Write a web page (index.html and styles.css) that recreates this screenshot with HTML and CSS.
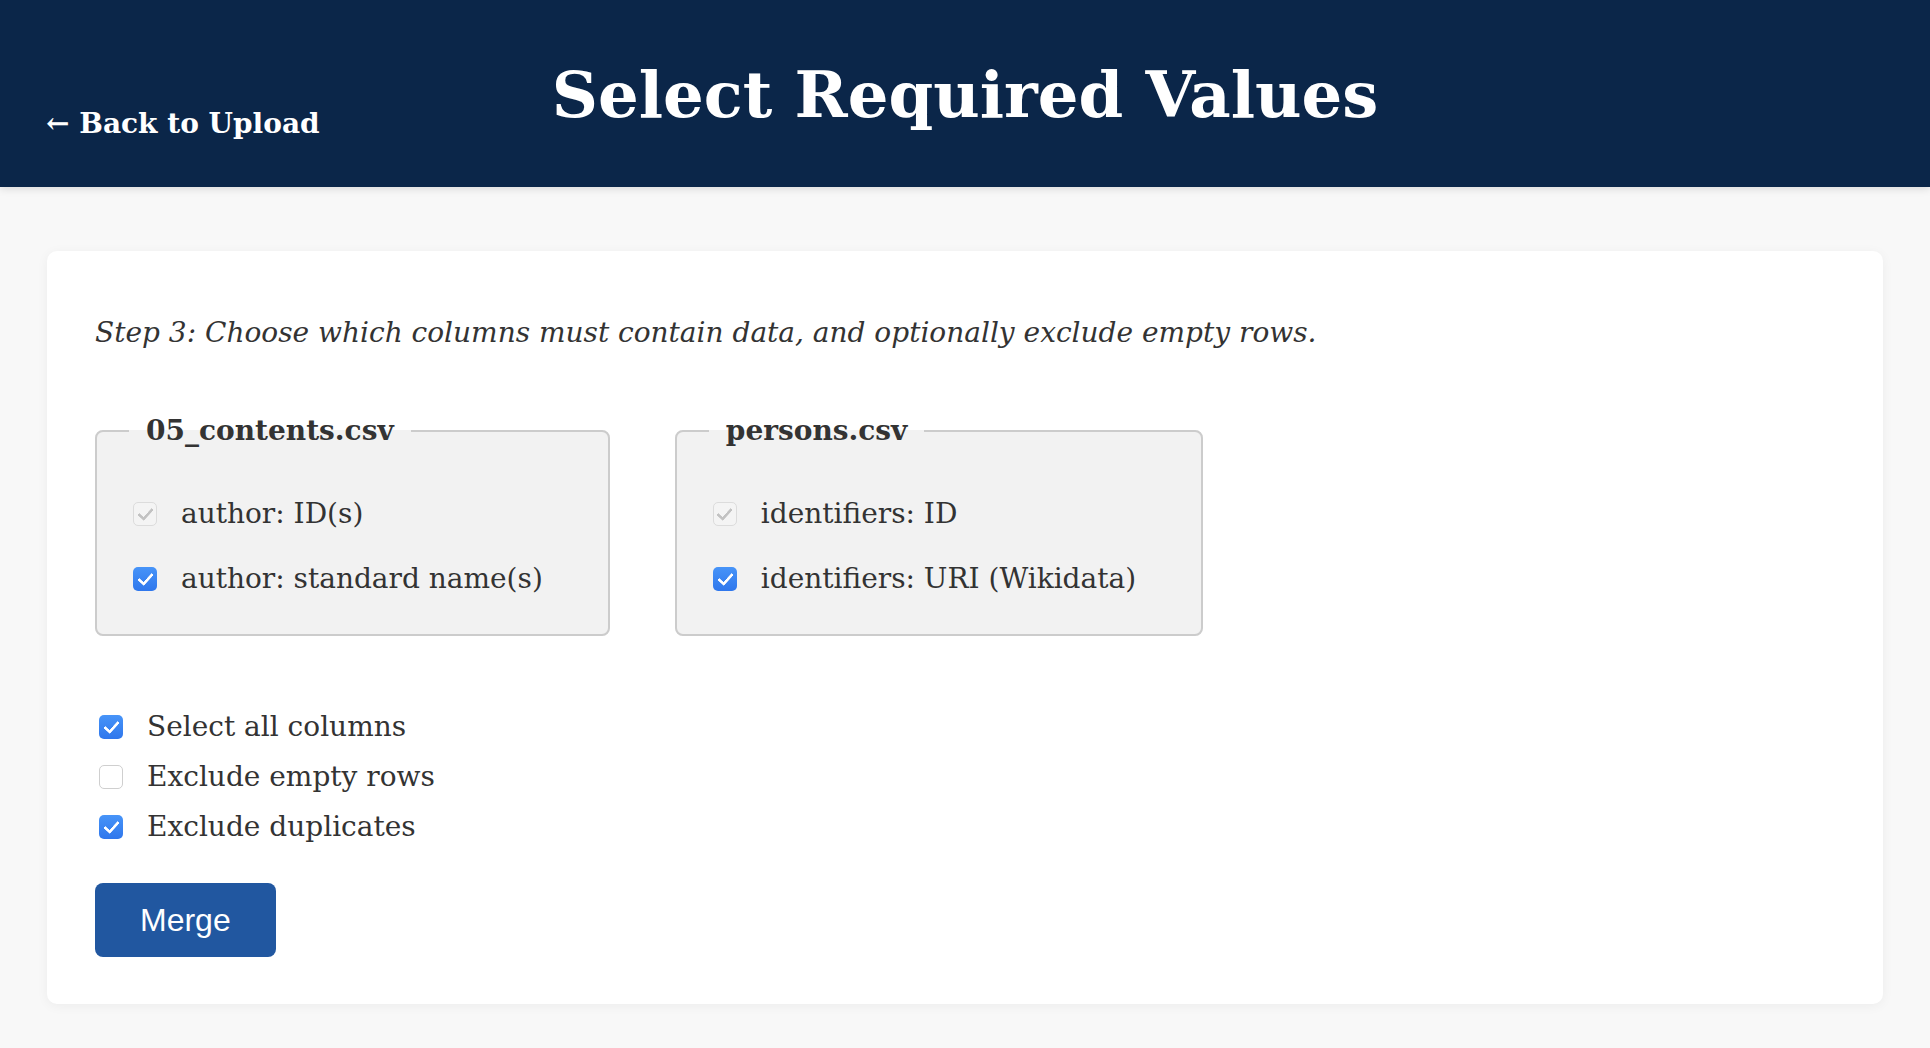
FILE: index.html
```html
<!DOCTYPE html>
<html lang="en">
<head>
<meta charset="utf-8">
<title>Select Required Values</title>
<link rel="stylesheet" href="styles.css">
</head>
<body>
<header class="topbar">
  <a class="back-link" href="#">← Back to Upload</a>
  <h1 class="title">Select Required Values</h1>
  <span class="spacer"></span>
</header>
<main class="page">
  <section class="card">
    <p class="step">Step 3: Choose which columns must contain data, and optionally exclude empty rows.</p>
    <div class="files">
      <fieldset class="file-box">
        <legend class="file-name">05_contents.csv</legend>
        <div class="cols">
          <label class="col-row"><input class="check" type="checkbox" checked disabled><span>author: ID(s)</span></label>
          <label class="col-row"><input class="check" type="checkbox" checked><span>author: standard name(s)</span></label>
        </div>
      </fieldset>
      <fieldset class="file-box">
        <legend class="file-name">persons.csv</legend>
        <div class="cols">
          <label class="col-row"><input class="check" type="checkbox" checked disabled><span>identifiers: ID</span></label>
          <label class="col-row"><input class="check" type="checkbox" checked><span>identifiers: URI (Wikidata)</span></label>
        </div>
      </fieldset>
    </div>
    <div class="options">
      <label class="opt-row"><input class="check" type="checkbox" checked><span>Select all columns</span></label>
      <label class="opt-row"><input class="check" type="checkbox"><span>Exclude empty rows</span></label>
      <label class="opt-row"><input class="check" type="checkbox" checked><span>Exclude duplicates</span></label>
    </div>
    <button class="merge-btn" type="button">Merge</button>
  </section>
</main>
</body>
</html>
```

FILE: styles.css
```css
html, body {
  margin: 0;
  padding: 0;
}

body {
  background: #f8f8f8;
  color: #333333;
  font-family: "DejaVu Serif", Georgia, serif;
}

.topbar {
  display: grid;
  grid-template-columns: 1fr auto 1fr;
  padding: 57px 46px 55px;
  background: #0b2649;
  box-shadow: 0 2px 8px rgba(0, 0, 0, 0.12);
}

.back-link {
  justify-self: start;
  align-self: end;
  margin-bottom: -9px;
  color: #ffffff;
  text-decoration: none;
  font-weight: bold;
  font-size: 28px;
  line-height: 34px;
  white-space: nowrap;
}

.title {
  margin: 0;
  color: #ffffff;
  font-weight: bold;
  font-size: 64px;
  line-height: 75px;
  white-space: nowrap;
}

.page {
  padding: 64px 47px 44px;
}

.card {
  background: #ffffff;
  border-radius: 10px;
  padding: 47px 48px;
  box-shadow: 0 2px 12px rgba(0, 0, 0, 0.05);
}

.step {
  margin: 18px 0 0;
  font-style: italic;
  font-size: 28px;
  line-height: 34px;
}

.files {
  display: flex;
  align-items: flex-start;
  gap: 65px;
  margin-top: 64px;
}

.file-box {
  margin: 0;
  padding: 49px 65px 38px 36px;
  background: #f2f2f2;
  border: 2px solid #cccccc;
  border-radius: 8px;
}

.file-name {
  margin-left: -4px;
  padding: 0 17px;
  font-weight: bold;
  font-size: 28px;
  line-height: 34px;
  color: #333333;
}

.cols {
  display: flex;
  flex-direction: column;
  gap: 31px;
}

.col-row,
.opt-row {
  display: flex;
  align-items: center;
  gap: 24px;
  font-size: 28px;
  line-height: 34px;
  white-space: nowrap;
}

.options {
  display: flex;
  flex-direction: column;
  gap: 16px;
  margin-top: 74px;
  padding-left: 4px;
}

.check {
  -webkit-appearance: none;
  appearance: none;
  position: relative;
  flex: none;
  box-sizing: border-box;
  width: 24px;
  height: 24px;
  margin: 0;
  border: 1.5px solid #cfcfcf;
  border-radius: 5px;
  background: #ffffff;
}

.check:checked {
  border: none;
  background: linear-gradient(#4794f8, #2f77ec);
}

.check:checked::after {
  content: "";
  position: absolute;
  left: 8px;
  top: 3px;
  width: 6px;
  height: 12px;
  border-right: 3.5px solid #ffffff;
  border-bottom: 3.5px solid #ffffff;
  border-radius: 1px;
  transform: rotate(42deg);
}

.check:checked:disabled {
  border: 1.5px solid #dcdcdc;
  background: #f4f4f4;
}

.check:checked:disabled::after {
  left: 6.5px;
  top: 1.5px;
  border-color: #c2c2c2;
}

.merge-btn {
  margin-top: 39px;
  padding: 18px 45px;
  border: none;
  border-radius: 8px;
  background: #2157a0;
  color: #ffffff;
  font-family: "Liberation Sans", Arial, sans-serif;
  font-size: 32px;
  line-height: 38px;
}
```
